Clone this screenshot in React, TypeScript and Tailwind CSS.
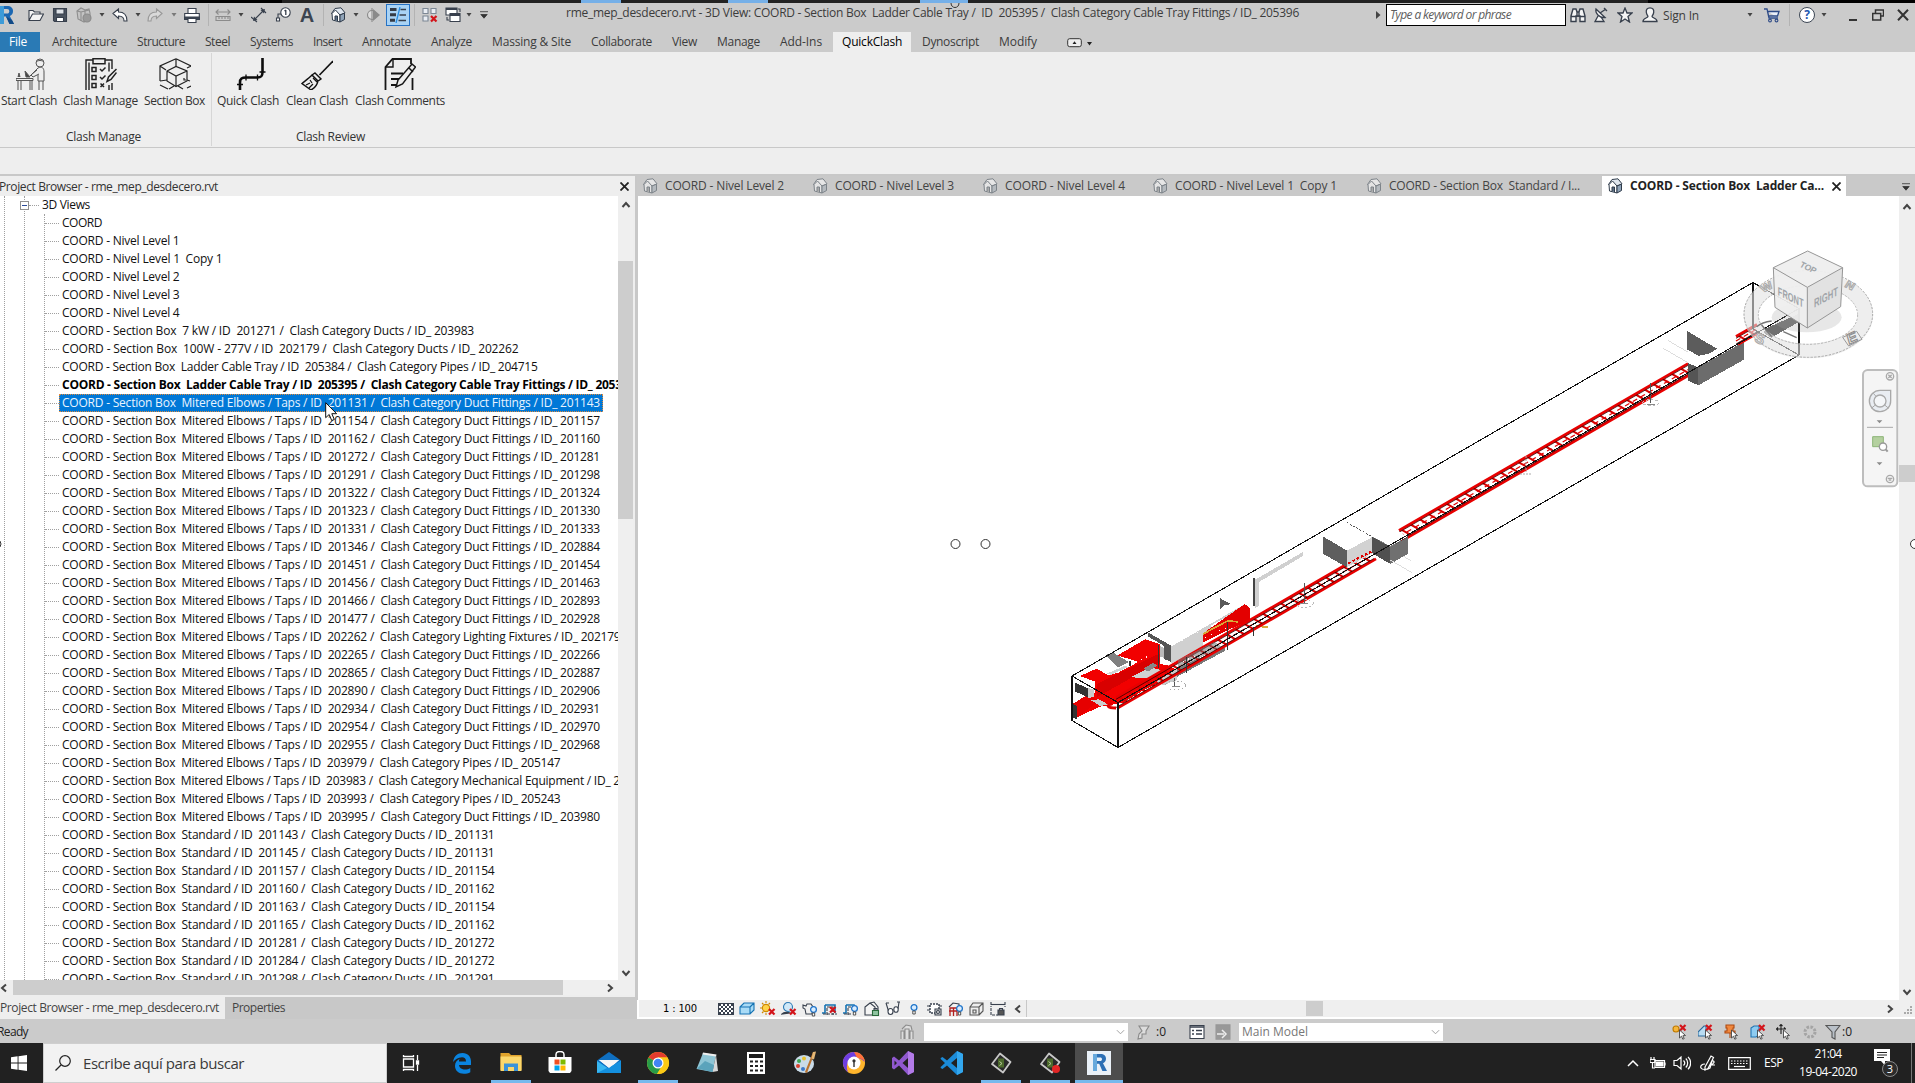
import React, { useLayoutEffect, useRef, useState } from "react";

/** Single-line label whose tracking is tuned so that it fills exactly `w` pixels. */
function T({ w, children, className = "" }: { w: number; children: string; className?: string }) {
  const ref = useRef<HTMLSpanElement>(null);
  const [ls, setLs] = useState(0);
  useLayoutEffect(() => {
    const el = ref.current;
    if (el) setLs((w - el.getBoundingClientRect().width) / children.length);
  }, [w, children]);
  return (
    <span ref={ref} className={"inline-block shrink-0 whitespace-pre " + className} style={{ letterSpacing: ls + "px" }}>
      {children}
    </span>
  );
}

type IP = { className?: string; children?: React.ReactNode; vb?: string };
const I = ({ className = "", children, vb = "0 0 16 16" }: IP) => (
  <svg viewBox={vb} className={"block h-4 w-4 shrink-0 " + className} fill="none" stroke="#38404d" strokeWidth="1.1">
    {children}
  </svg>
);
const Caret = ({ className = "" }: { className?: string }) => (
  <svg viewBox="0 0 6 4" className={"block h-1 w-1.5 shrink-0 " + className}>
    <path d="M.5 0h5L3 3.6z" fill="#444" />
  </svg>
);
const Sep = ({ className = "" }: { className?: string }) => <div className={"h-[22px] w-px shrink-0 bg-[#b3b3b3] " + className} />;

const House = ({ dim = false }: { dim?: boolean }) => (
  <g stroke={dim ? "#7d8389" : "#2f3b4a"} strokeWidth="1">
    <path d="M1.500 6.500 5 1.500l6-.7 4 5-5 2.200z" fill={dim ? "#e6e6e6" : "#dfe6ee"} />
    <path d="M2 6.500 5.500 3l4.500 5v7l-7.500-2z" fill={dim ? "#e4e4e4" : "#fff"} />
    <path d="M10 8l4.500-1.800v6.300L10 15z" fill={dim ? "#b5babf" : "#8fa3b8"} />
    <path d="M5 13.500V9h2.500v5" fill={dim ? "#aaa" : "#5c6f84"} />
  </g>
);
const RedX = ({ x = 9, y = 9 }: { x?: number; y?: number }) => (
  <path d={`M${x} ${y}l5.5 5.5m0-5.5l-5.5 5.5`} stroke="#d3141a" strokeWidth="2.2" />
);
const Bulb = ({ x = 8, y = 5 }: { x?: number; y?: number }) => (
  <g transform={`translate(${x} ${y})`}>
    <circle cx="3.5" cy="3.5" r="2.9" fill="#d9edff" stroke="#1f74c9" strokeWidth="1.3" />
    <path d="M2.3 7h2.4v3H2.3z" fill="#fff" stroke="#444" strokeWidth=".9" />
  </g>
);
const Cur = () => <path d="M7.5 6v8l2-1.8 1.3 3 1.4-.6-1.3-2.9 2.6-.2z" fill="#fff" stroke="#444" strokeWidth=".9" />;

function TitleBar() {
  return (
    <div className="flex h-[29px] items-center bg-[#cbcbcb] pb-[5px] text-[12px] text-[#3c3c3c]">
      <svg viewBox="0 0 14 18" className="h-[18px] w-[14px] shrink-0">
        <path d="M0 0h7c4 0 6 2 6 5.300 0 2.500-1.300 4-3.200 4.700L14 18h-4.500L6 10.500H4V18H0z" fill="#1b67b2" />
        <path d="M0 0h4v18H0z" fill="#3d9bd8" />
        <path d="M4 3h3c1.500 0 2.200.8 2.200 2.200S8.500 7.500 7 7.500H4z" fill="#cbcbcb" />
        <path d="M6 10.500 9.500 18H14l-2-4z" fill="#124a86" />
      </svg>
      <I className="ml-[14px]"><path d="M1 13.500V3.500h4l1.500 1.500H12v2M1 13.500l3.500-6.500h11L12 13.500z" fill="#f4f4f4" /></I>
      <I className="ml-2"><path d="M1.500 1.500h13v13h-12l-1-1z" fill="#4b535f" /><path d="M4 2h8v5H4z" fill="#dfe3e8" /><path d="M4.500 10.500h7v4h-7z" fill="#fff" /></I>
      <I className="ml-2"><path d="M1 4l4-3 4 2 4-1 1 4v5l-6 4-6-3z" fill="#c4c4c4" stroke="#8e8e8e" /><path d="M5 5v9M9 3v4M1 4l4 1 8-2" stroke="#8e8e8e" /><circle cx="11" cy="11" r="4" fill="#9a9a9a" stroke="#8a8a8a" /></I>
      <Caret className="ml-[7px]" />
      <I className="ml-[7px]"><path d="M1 6.500 6.500 2v3C12 5 15 8 15 14h-3c0-3-1.500-5-5.500-5v2.500z" fill="#fff" /></I>
      <Caret className="ml-[7px]" />
      <I className="ml-[6px]"><path d="M15 6.500 9.500 2v3C4 5 1 8 1 14h3c0-3 1.500-5 5.500-5v2.500z" fill="#d9d9d9" stroke="#999" /></I>
      <Caret className="ml-2 opacity-60" />
      <I className="ml-[7px]"><path d="M4 1.500h8v5H4z" fill="#fff" /><path d="M.7 6.500h14.600v6H.7z" fill="#fff" /><path d="M.7 10h14.600v2.500H.7z" fill="#3c4654" /><path d="M4 11.500h8v4H4z" fill="#fff" /></I>
      <Sep className="ml-2" />
      <I className="ml-[6px]"><path d="M1 5h14M3.500 2.500 1 5l2.500 2.500M12.500 2.500 15 5l-2.500 2.500M1 9.500h14v4H1zM4 10v2m3-2v2m3-2v2m3-2v2" stroke="#8b8b8b" /></I>
      <Caret className="ml-[7px]" />
      <I className="ml-[7px]"><path d="M3 13 13 3M0 10l6 5M10 1l5 5" /><path d="M2 14l1-4.500L6.500 13zM14 2l-1 4.500L9.500 3z" fill="#38404d" stroke="none" /></I>
      <I className="ml-2"><circle cx="10.500" cy="5.500" r="4.700" fill="#fff" /><path d="M10.800 3v5M9.500 4l1.300-1" strokeWidth="1.300" /><path d="M6 7H3v5" /><path d="M1.500 11h3v3h-3z" fill="#fff" /></I>
      <span className="ml-2 w-4 shrink-0 text-center font-['Liberation_Sans'] text-[20px] leading-4 font-bold text-[#3c4450]">A</span>
      <Sep className="ml-2" />
      <I className="ml-[6px]"><House /></I>
      <Caret className="ml-[7px]" />
      <I className="ml-[6px]"><circle cx="7" cy="8" r="4.500" fill="#ddd" stroke="#8a8a8a" /><path d="M8 2l7 6-7 6z" fill="#8a8a8a" stroke="none" /><path d="M7 1v14" stroke="#8a8a8a" /></I>
      <div className="ml-[5px] flex h-[22px] w-6 shrink-0 items-center justify-center border border-[#2672c4] bg-[#a9d3f5]">
        <I><path d="M0 2.500h6.500M0 7.800h6M0 13.200h5" strokeWidth="3" stroke="#343b46" /><path d="M10.500 2.500H16M9.500 8H16M8.500 13.500H16" strokeWidth="1.300" /><path d="M10 0 6 16" stroke="#2b8de0" strokeWidth="1.300" /></I>
      </div>
      <Sep className="ml-1" />
      <I className="ml-[7px]"><path d="M1 1.500h5v5H1zM9 1.500h5v5H9zM1 9h5v5H1z" fill="#e9edf3" stroke="#7c8794" /><RedX x={9} y={9} /></I>
      <I className="ml-[7px]"><path d="M1 1h11v7H1z" fill="#fff" /><path d="M5 6.500h10v8H5z" fill="#fff" /><path d="M5 8h10M1 2h11" strokeWidth="1.800" /><path d="M13 2h2v3M2 10v3h2" /></I>
      <Caret className="ml-[5px]" />
      <svg viewBox="0 0 8 8" className="ml-2 h-2 w-2 shrink-0"><path d="M0 .7h8M.8 3.500h6.400L4 7.200z" fill="#333" stroke="#333" strokeWidth=".8" /></svg>
      <T w={733} className="ml-[78px] pb-[5px]">{"rme_mep_desdecero.rvt - 3D View: COORD - Section Box  Ladder Cable Tray /  ID  205395 /  Clash Category Cable Tray Fittings / ID_ 205396"}</T>
      <svg viewBox="0 0 5 8" className="ml-[77px] h-2 w-[5px] shrink-0"><path d="M0 0l4.500 4L0 8z" fill="#444" /></svg>
      <div className="ml-[5px] flex h-[22px] w-[180px] shrink-0 items-center border border-black bg-white pl-[3px] text-[#5d5d5d] italic"><T w={121}>Type a keyword or phrase</T></div>
      <I className="ml-1"><path d="M1 9 3 2h3l1 3h2l1-3h3l2 7v5.500h-5V9H6v5.500H1zM1 9.500h5M10 9.500h5M7 5v5m2-5v5" fill="#f5f5f5" strokeWidth="1.400" /></I>
      <I className="ml-[7px]"><path d="M3 2c-1 4 3 9 9 8.500zM5 9l-3 5.500h9L8 10M7 6l6-4M11 1l3 3" fill="#f5f5f5" strokeWidth="1.300" /></I>
      <I className="ml-2"><path d="M8 1l2 5h5l-4 3.500 1.500 5.500L8 12l-4.500 3L5 9.500 1 6h5z" fill="#f5f5f5" strokeWidth="1.300" /></I>
      <I className="ml-[9px]"><path d="M8 .8c3 0 4 2 3.700 4.500-.2 2-1.200 3.200-1.700 4 0 2 5 1.500 5 5.200H1C1 10.800 6 11.300 6 9.300c-.5-.8-1.500-2-1.700-4C4 2.800 5 .8 8 .8z" fill="#f5f5f5" strokeWidth="1.300" /></I>
      <T w={36} className="ml-[5px] pt-px">Sign In</T>
      <Caret className="ml-12" />
      <I className="ml-[11px]"><path d="M0 2h3l2 9h9M3.500 4.500H15L13.500 9H5" fill="#eaf0fa" stroke="#2d4a86" strokeWidth="1.300" /><circle cx="6" cy="13.500" r="1.400" stroke="#2d4a86" /><circle cx="12.500" cy="13.500" r="1.400" stroke="#2d4a86" /></I>
      <Sep className="ml-[9px]" />
      <div className="ml-[9px] flex h-4 w-4 shrink-0 items-center justify-center rounded-full border border-[#3c4654] bg-white text-[12px] font-bold text-[#2457b0]">?</div>
      <Caret className="ml-[6px]" />
      <div className="mt-[9px] ml-[22px] h-[2px] w-2 shrink-0 bg-[#333]" />
      <I vb="0 0 12 12" className="ml-[15px] !h-3 !w-3"><path d="M3.500 4V1h8v6H9M.7 4.500h8V11h-8z" strokeWidth="1.500" stroke="#333" /></I>
      <I vb="0 0 12 12" className="ml-[13px] !h-3 !w-3"><path d="M1 .8 11 11.200M11 .8 1 11.200" strokeWidth="2" stroke="#333" /></I>
    </div>
  );
}

const tabs: [string, number][] = [
  ["Architecture", 65], ["Structure", 48], ["Steel", 25], ["Systems", 43], ["Insert", 29], ["Annotate", 49], ["Analyze", 41],
  ["Massing & Site", 79], ["Collaborate", 61], ["View", 25], ["Manage", 43], ["Add-Ins", 42], ["QuickClash", 60], ["Dynoscript", 57], ["Modify", 38],
];

function TabStrip() {
  return (
    <div className="flex h-5 bg-[#cbcbcb] text-[12px] leading-5 text-[#3c3c3c]">
      <div className="flex w-10 shrink-0 bg-[#2a7ab5] pl-[9px] text-white"><T w={18}>File</T></div>
      <div className="flex pl-[3px]">
        {tabs.map(([t, w]) => (
          <div key={t} className={"mr-[2px] flex px-[9px] last:mr-0 " + (t === "QuickClash" ? "bg-[#eeeeee] text-black" : "")}><T w={w}>{t}</T></div>
        ))}
      </div>
      <svg viewBox="0 0 26 10" className="mt-[6px] ml-[21px] h-[10px] w-[26px]">
        <rect x=".7" y=".7" width="13.600" height="8" rx="2" fill="#eee" stroke="#333" />
        <path d="M5.500 6h4L7.500 3.300zM20 4h5l-2.500 3.500z" fill="#222" />
      </svg>
    </div>
  );
}

const ric = {
  start: (
    <g strokeWidth="1" stroke="#555">
      <circle cx="24" cy="5" r="4" /><path d="M20 4c2-2 6-2 8 0M22 10l-8 8M21 12l-6 5 2 2 6-3M22 10c4-2 6 0 6 4v9h-6v-6M23 23v9m4-9v9M0 20.500h17v2H0zM2 23v9m3-9v9m9-9v9m2-9v9" />
      <path d="M9 13l5 6h-4zM2 19l1-4 1 4" fill="#444" />
    </g>
  ),
  manage: (
    <g strokeWidth="2" stroke="#222">
      <path d="M1 32V2h26v9M27 25v7M4 32V4.500M24 4.500v9M24 27v5" strokeWidth="1.400" />
      <path d="M8 .8h12v5H8z" fill="#eee" strokeWidth="1.500" />
      <path d="M7 9.500h4v4H7zM7 17.500h4v4H7zM7 25.500h4v4H7z" strokeWidth="1.500" />
      <path d="M15 11l2 2 3.500-3.500M15 19l2 2 3.500-3.500M15.500 25.500l3.500 3.500m0-3.500L15.500 29" strokeWidth="1.500" />
      <path d="M31.500 11l-8 8-1.500 4.500 4-2 5.500-7" strokeWidth="1.500" fill="#eee" />
    </g>
  ),
  box: (
    <g strokeWidth="1.200" stroke="#222">
      <path d="M17 .7 32 8M17 .7 1 8v15M1 27l8 4M32 8l-4 2M17 9V1M1 8l6 4M31 23l-3-1" />
      <path d="M8 13l9-4.500L28 13v10L17 28.500 8 23zM8 13l9 5 11-5M17 18v10" />
      <path d="M25 20v2h2M1 23l7-1M10 31l5-3M24 31l-5-3M28 30l4-2" strokeWidth="1.200" />
    </g>
  ),
  pipe: (
    <g stroke="#0c0c0c">
      <path d="M26.500 0v14c0 4-1 5.500-5 5.500H10c-4 0-6 1-6 5V32" strokeWidth="2.600" />
      <path d="M23.500 14h6M21.500 16.500v6M10 16.500v6M1 26.500h6" strokeWidth="1.300" />
    </g>
  ),
  broom: (
    <g strokeWidth="1.600" stroke="#111">
      <path d="M32 3 18.500 17" /><path d="M14 15l6 6-3 2-6-6zM11 17C8 20 4 23 1 25.500L10 32c4-2 6-5 7-9z" strokeWidth="1.400" /><path d="M5 27l4-2M8 30l4-4M12 20l4 4M9 22l2 3" strokeWidth="1.200" />
    </g>
  ),
  note: (
    <g strokeWidth="1.800" stroke="#151515">
      <path d="M1.500 32V9l7-8H27v5M28.500 20v12" /><path d="M9 1v8H2" strokeWidth="1.400" /><path d="M7 15.500h12M7 21h9M7 27h5" strokeWidth="1.800" />
      <path d="M28 6l3.500 3-13 17-6.500 3 2-7zM25 10l4 4" strokeWidth="1.500" fill="#eee" />
    </g>
  ),
};
const RB = ({ icon, w, children, className, iconClass }: { icon: React.ReactNode; w: number; children: string; className: string; iconClass: string }) => (
  <div className={"shrink-0 " + className}>
    <svg viewBox="0 0 32 32" className={"block h-8 w-8 " + iconClass} fill="none">{icon}</svg>
    <div className="mt-[2px] h-[18px] leading-[18px]"><T w={w}>{children}</T></div>
  </div>
);

function Ribbon() {
  return (
    <div className="h-[96px] border-b border-[#c8c8c8] bg-[#eeeeee] pt-px text-[12px] text-[#333]">
      <div className="flex h-[93px]">
        <div className="flex w-[212px] shrink-0 flex-col border-r border-[#d6d6d6] pt-[5px]">
          <div className="flex pl-px">
            <RB icon={ric.start} w={56} className="w-[62px]" iconClass="ml-[15px]">Start Clash</RB>
            <RB icon={ric.manage} w={75} className="w-[81px]" iconClass="ml-[22px]">Clash Manage</RB>
            <RB icon={ric.box} w={61} className="w-[61px]" iconClass="ml-[15px]">Section Box</RB>
          </div>
          <div className="mt-[18px] h-[18px] pl-[66px] leading-[18px]"><T w={75}>Clash Manage</T></div>
        </div>
        <div className="flex flex-col pt-[5px] pl-[5px]">
          <div className="flex">
            <RB icon={ric.pipe} w={62} className="w-[69px]" iconClass="ml-[19px]">Quick Clash</RB>
            <RB icon={ric.broom} w={62} className="w-[69px]" iconClass="ml-[15px]">Clean Clash</RB>
            <RB icon={ric.note} w={90} className="w-[91px]" iconClass="ml-[29px]">Clash Comments</RB>
          </div>
          <div className="mt-[18px] h-[18px] pl-[79px] leading-[18px]"><T w={69}>Clash Review</T></div>
        </div>
      </div>
    </div>
  );
}

type Row = [string, number, string?];
const mit = (a: string, cat: string, b: string, w: number): Row => [`COORD - Section Box  Mitered Elbows / Taps / ID  ${a} /  Clash Category ${cat} / ID_ ${b}`, w];
const df = (a: string, b: string) => mit(a, "Duct Fittings", b, 538);
const std = (a: string, b: string): Row => [`COORD - Section Box  Standard / ID  ${a} /  Clash Category Ducts / ID_ ${b}`, 432.5];
const rows: Row[] = [
  ["COORD", 40], ["COORD - Nivel Level 1", 117.5], ["COORD - Nivel Level 1  Copy 1", 160.5], ["COORD - Nivel Level 2", 117.5], ["COORD - Nivel Level 3", 117.5], ["COORD - Nivel Level 4", 117.5],
  ["COORD - Section Box  7 kW / ID  201271 /  Clash Category Ducts / ID_ 203983", 412],
  ["COORD - Section Box  100W - 277V / ID  202179 /  Clash Category Ducts / ID_ 202262", 456.5],
  ["COORD - Section Box  Ladder Cable Tray / ID  205384 /  Clash Category Pipes / ID_ 204715", 475.5],
  ["COORD - Section Box  Ladder Cable Tray / ID  205395 /  Clash Category Cable Tray Fittings / ID_ 205396", 573, "bold"],
  [...(df("201131", "201143").slice(0, 2) as [string, number]), "sel"],
  df("201154", "201157"), df("201162", "201160"), df("201272", "201281"), df("201291", "201298"), df("201322", "201324"), df("201323", "201330"), df("201331", "201333"),
  df("201346", "202884"), df("201451", "201454"), df("201456", "201463"), df("201466", "202893"), df("201477", "202928"),
  mit("202262", "Lighting Fixtures", "202179", 558.5),
  df("202265", "202266"), df("202865", "202887"), df("202890", "202906"), df("202934", "202931"), df("202954", "202970"), df("202955", "202968"),
  mit("203979", "Pipes", "205147", 498.5), mit("203983", "Mechanical Equipment", "205148", 591), mit("203993", "Pipes", "205243", 498.5), df("203995", "203980"),
  std("201143", "201131"), std("201145", "201131"), std("201157", "201154"), std("201160", "201162"), std("201163", "201154"), std("201165", "201162"),
  std("201281", "201272"), std("201284", "201272"), std("201298", "201291"),
];

const Chev = ({ d, className = "" }: { d: string; className?: string }) => (
  <svg viewBox="0 0 10 10" className={"block h-[10px] w-[10px] shrink-0 " + className} fill="none" stroke="#444" strokeWidth="2"><path d={d} /></svg>
);
const UP = "M1.500 7 5 3l3.500 4", DN = "M1.500 3 5 7l3.500-4", LT = "M7 1.500 3 5l4 3.500", RT = "M3 1.500 7 5 3 8.500";

function Browser() {
  return (
    <div className="flex w-[637px] shrink-0 flex-col border-r-2 border-[#c8c8c8] bg-[#eeeeee] text-[12px]">
      <div className="flex h-5 items-center justify-between pr-[6px] text-[#333]">
        <T w={219} className="-ml-px pt-[2px]">Project Browser - rme_mep_desdecero.rvt</T>
        <svg viewBox="0 0 10 10" className="h-[9px] w-[9px]" stroke="#222" strokeWidth="2"><path d="M.5.5l9 9m0-9l-9 9" /></svg>
      </div>
      <div className="flex h-[784px]">
        <div className="relative w-[618px] overflow-hidden bg-white text-[#111]">
          <div className="pointer-events-none absolute inset-y-0 left-[4px] border-l border-dotted border-[#a0a0a0]" />
          <div className="pointer-events-none absolute inset-y-0 left-[24px] border-l border-dotted border-[#a0a0a0]" />
          <div className="pointer-events-none absolute top-[18px] bottom-0 left-[44px] border-l border-dotted border-[#a0a0a0]" />
          <div className="flex h-[18px] items-center pl-5">
            <div className="relative flex h-[9px] w-[9px] items-center justify-center border border-[#919191] bg-white"><div className="h-px w-[5px] bg-[#2b4b9b]" /></div>
            <div className="mr-[3px] w-[10px] border-t border-dotted border-[#a0a0a0]" />
            <T w={48}>3D Views</T>
          </div>
          {rows.map(([t, w, k]) => (
            <div key={t} className="flex h-[18px] items-center pl-[45px] leading-[18px]">
              <div className="w-[14px] shrink-0 border-t border-dotted border-[#a0a0a0]" />
              <div className={k === "sel" ? "h-[18px] shrink-0 border border-dotted border-[#e08a3c] bg-[#0078d7] px-[2px] leading-4 text-[#e9f4ff]" : k === "bold" ? "ml-[3px] font-bold text-black" : "ml-[3px]"}>
                <T w={w}>{t}</T>
              </div>
            </div>
          ))}
          <svg viewBox="0 0 13 20" className="absolute top-[206px] left-[325px] h-5 w-[13px]"><path d="M.7.7v15l3.500-3.200 2.500 6 2.600-1-2.500-5.800h4.800z" fill="#fff" stroke="#111" /></svg>
        </div>
        <div className="flex w-[15px] flex-col items-center justify-between bg-[#efefef] pt-1 pb-[2px]">
          <Chev d={UP} />
          <div className="mt-[51px] mb-auto h-[258px] w-[15px] bg-[#cdcdcd]" />
          <Chev d={DN} />
        </div>
      </div>
      <div className="flex h-[15px] items-center bg-[#efefef]">
        <Chev d={LT} className="-ml-px" />
        <div className="ml-1 h-[15px] w-[550px] bg-[#cdcdcd]" />
        <Chev d={RT} className="ml-[42px]" />
      </div>
      <div className="mt-[2px] flex h-[22px] bg-[#c8c8c8] leading-[22px] text-[#444]">
        <div className="w-[225px] bg-[#eeeeee]"><T w={219}>Project Browser - rme_mep_desdecero.rvt</T></div>
        <T w={53} className="ml-[7px]">Properties</T>
      </div>
    </div>
  );
}

const docTabs: [string, number, string][] = [
  ["COORD - Nivel Level 2", 119, "w-[170px]"], ["COORD - Nivel Level 3", 119, "w-[170px]"], ["COORD - Nivel Level 4", 120, "w-[170px]"],
  ["COORD - Nivel Level 1  Copy 1", 162, "w-[214px]"], ["COORD - Section Box  Standard / I...", 191, "w-[236px]"],
];

/** Ladder-style cable tray between two x positions; `u` is the upper rail height at x0. */
function Tray({ x0, x1, u, h }: { x0: number; x1: number; u: number; h: number }) {
  const k = 0.5775;
  const dx = h / (2 * k);
  const n = Math.floor((x1 - x0) / 9);
  return (
    <g>
      {Array.from({ length: n }, (_, i) => {
        const x = x0 + 2 + i * 9;
        const y = u - k * (x - x0);
        return <path key={i} d={`M${x} ${y}l${dx} ${dx * k}`} stroke="#d80000" strokeWidth="2" />;
      })}
      <path d={`M${x0} ${u + h / 2}L${x1} ${u + h / 2 - k * (x1 - x0)}`} stroke="#e00000" strokeWidth="1.300" strokeDasharray="5 4" />
      <path d={`M${x0} ${u}L${x1} ${u - k * (x1 - x0)}M${x0 + 2} ${u + h - 2 * k}L${x1 + 2} ${u + h - k * (x1 + 2 - x0)}`} stroke="#e80000" strokeWidth="2.800" />
      <path d={`M${x0} ${u + 1.800}L${x1} ${u + 1.800 - k * (x1 - x0)}M${x0} ${u + h - 1.500}L${x1} ${u + h - 1.500 - k * (x1 - x0)}`} stroke="#300" strokeWidth=".8" />
    </g>
  );
}

function Scene() {
  return (
    <svg viewBox="638 196 1261 804" className="block h-[804px] w-[1261px]" fill="none">
      <g>
        <g transform="translate(1050 540) scale(.33333)" shapeRendering="crispEdges">
          <path d="M90 408l50-22 35 20 30-8 60-32-62-20 82-48 45 14v60l25 5 35 18-110 56-60 37-70 12-70 32v-40l55-35v-32z" fill="#f20000" />
          <path d="M140 432l190-92v25L215 430l-75 42z" fill="#d80000" />
          <path d="M68 492l40-25 40 15-68 52-12-8z" fill="#e60000" />
          <path d="M68 492l12 5v40l-12-4z" fill="#333" />
          <path d="M75 428l38 16v28l-38-18z" fill="#333" />
          <path d="M113 444l20 5v22l-20 3z" fill="#ccc" />
          <path d="M140 386l28 16 35-2 30-22-65-32z" fill="#fff" />
          <path d="M168 402l60-26 6 6-50 22z" fill="#cfd4d4" />
          <path d="M165 345l27-6 45 27-33 16z" fill="#808080" />
          <path d="M240 412l60-30 40 10-40 22z" fill="#cfd4d4" />
          <path d="M280 385l30-16 12 8-28 18z" fill="#888" />
          <path d="M122 480l25-2 28 16-25 4z" fill="#ccc" />
          <path d="M382 385l140-65 4 12-144 78z" fill="#7a7a7a" />
          <path d="M320 425l60-38v34l-40 14z" fill="#c9cccc" />
          <path d="M295 278l70 40v48l-22-8v-40l-48-28z" fill="#555" />
          <path d="M330 318l12 6v30l-12-5z" fill="#bbb" />
          <path d="M363 320l222-128v10L400 300z" fill="#cfcfcf" />
          <path d="M363 320l97-46v54l-97 42z" fill="#d4d4d4" />
          <path d="M363 320l120-64v17l-24 12v40l-96 45z" fill="#d0d0d0" />
          <path d="M459 280l125-88 16 12v34l-141 70z" fill="#e30000" />
          <path d="M459 282l75-40 30 4M618 258l35 4" stroke="#d8a838" strokeWidth="5" />
          <path d="M609 113h7v85h-7z" fill="#444" />
          <path d="M614 120l145-84v12L627 126v72l-12 6z" fill="#d0d0d0" />
          <path d="M511 175l32 18-20 2-12 14z" fill="#5a5a5a" />
        </g>
        <Tray x0={1116} x1={1374} u={697.500} h={11.500} />
        <Tray x0={1399} x1={1688} u={530.500} h={12} />
        <path d="M1112 704c-6 1-5 4 4 4" stroke="#e00000" strokeWidth="3" />
        <g transform="translate(1050 540) scale(.33333)" shapeRendering="crispEdges">
          <path d="M383 360l110-54 22 14-132 66z" fill="#777" fillOpacity=".55" />
          <path d="M325 315v70M410 350v50M533 245v85M610 260v28M240 363v15" stroke="#333" strokeWidth="3.500" />
          <path d="M763 130v58M375 415v25" stroke="#555" strokeWidth="3" />
          <ellipse cx="763" cy="190" rx="27" ry="12" stroke="#bbb" strokeWidth="3" strokeDasharray="5 7" />
          <ellipse cx="377" cy="436" rx="30" ry="13" stroke="#aaa" strokeWidth="3" strokeDasharray="5 7" />
          <path d="M750 190h24M365 441h24" stroke="#888" strokeWidth="3" />
          <path d="M465 293h3m15-10h3m20-11h3m15-6h3M255 365h3m14-7h3m14-7h3M400 365h3m12-8h3m14-8h3" stroke="#fff" strokeWidth="4" />
        </g>
        <g transform="translate(1280 480) scale(.33333)" shapeRendering="crispEdges">
          <path d="M200 127l-70 42 71 42 75-40z" fill="#fff" />
          <path d="M200 127l76 43" stroke="#555" strokeWidth="3" strokeDasharray="6 5" />
          <path d="M130 170l71 42v50l-71-40z" fill="#5e5e5e" />
          <path d="M201 212l76-41v49l-76 42z" fill="#d2d2d2" />
          <path d="M277 171l54 30v51l-54-32z" fill="#505050" />
          <path d="M331 201l53-30v50l-53 31z" fill="#707070" />
          <path d="M331 240l65 38M370 228l22 14" stroke="#ddd" strokeWidth="3" />
          <path d="M277 171l55 28 50-29-28-15z" fill="#fff" />
          <path d="M277 171l54 29 53-30" stroke="#444" strokeWidth="2" />
          <path d="M205 250l70-36" stroke="#e00000" strokeWidth="6" strokeDasharray="8 6" />
        </g>
        <g transform="translate(1640 230) scale(.33333)" shapeRendering="crispEdges">
          <path d="M70 355l72 42M85 332l60 35" stroke="#ddd" strokeWidth="3" />
          <path d="M141 303l105 62-70 12-35-18z" fill="#5c5c5c" />
          <path d="M146 402L370 285l108-48v24L312 337l-137 75z" fill="#fff" />
          <path d="M145 400l30 12v54l-30-14z" fill="#555" />
          <path d="M175 412l137-77v54l-137 77z" fill="#6c6c6c" />
          <path d="M375 296l103-45v24l-84 48-22-14z" fill="#707070" />
          <path d="M32 460v60" stroke="#555" strokeWidth="3" />
          <path d="M20 523h24" stroke="#888" strokeWidth="3" />
          <ellipse cx="32" cy="518" rx="25" ry="9" stroke="#bbb" strokeWidth="3" strokeDasharray="8 6" />
        </g>
        <Tray x0={1736} x1={1757} u={336.500} h={9} />
        <path d="M1526 456v16M1520 474h12" stroke="#aaa" strokeDasharray="2 1" />
      </g>
      <g stroke="#111" strokeWidth="1.100" shapeRendering="crispEdges">
        <path d="M1072 676 1753 282.500 1799 308.500V355L1118 747.500 1072 720.500zM1118 747.500V702.500L1799 308.500M1072 676 1118 702.500M1753 282.500V329L1799 355" />
      </g>
      <g stroke="#333"><circle cx="955.500" cy="544" r="4.500" fill="#fff" /><circle cx="985.500" cy="544" r="4.500" fill="#fff" /></g>
      <g transform="translate(1640 230) scale(.33333)">
        <ellipse cx="505" cy="255" rx="172" ry="108" stroke="#e3e3e3" strokeOpacity=".6" strokeWidth="44" />
        <ellipse cx="505" cy="252" rx="193" ry="130" stroke="#a8a8a8" strokeWidth="3" strokeDasharray="7 4" />
        <ellipse cx="504" cy="255" rx="149" ry="88" stroke="#b4b4b4" strokeWidth="3" strokeDasharray="7 4" />
        <ellipse cx="500" cy="262" rx="105" ry="45" fill="#a0a0a0" fillOpacity=".25" />
        <path d="M400 113L503 63l105 50-6 117-100 64-97-62z" fill="#eeeeee" fillOpacity=".95" />
        <path d="M502 172l106-58-6 116-100 64z" fill="#e2e2e2" />
        <path d="M400 113l102 59 106-59M502 172v122M400 113L503 63l105 50-6 117-100 64-97-62z" stroke="#969696" strokeWidth="3" />
        <g fontFamily="Liberation Sans" fontWeight="bold" fill="#a0a4a8" textAnchor="middle">
          <text transform="matrix(.85 .42 -.5 .8 500 120)" fontSize="27">TOP</text>
          <text transform="matrix(.72 .36 0 1.150 452 214)" fontSize="31">FRONT</text>
          <text transform="matrix(.72 -.38 0 1.150 558 214)" fontSize="32">RIGHT</text>
          <text transform="matrix(1 -.45 .3 1 640 338)" fontSize="42" fill="#eee" stroke="#8d8d8d" strokeWidth="3">E</text>
          <text transform="matrix(1 .4 -.3 1 355 340)" fontSize="40" fill="#eee" stroke="#aaa" strokeWidth="3">S</text>
          <text transform="matrix(1 .5 -.5 .8 624 176)" fontSize="34" fill="#eee" stroke="#aaa" strokeWidth="3">N</text>
          <text transform="matrix(1 -.5 .5 .8 385 180)" fontSize="34" fill="#eee" stroke="#aaa" strokeWidth="3">W</text>
        </g>
        <path d="M608 322l42-18 16 24-40 20z" stroke="#999" strokeWidth="3" />
        <path d="M365 285l30 35M350 290c15-12 30-15 45-17M430 305l40 18" stroke="#777" strokeWidth="4" />
      </g>
      <g transform="translate(1640 230) scale(.33333)">
        <rect x="669" y="420" width="103" height="349" rx="14" fill="#f5f5f5" stroke="#bdbdbd" strokeWidth="6" />
        <g stroke="#a9a9a9" strokeWidth="4">
          <circle cx="750" cy="439" r="11" /><path d="M745 434l10 10m0-10l-10 10" />
          <circle cx="750" cy="747" r="11" /><path d="M743 745h14M746 750h8" />
          <path d="M720 481h32v31a32 32 0 1 1-32-31z" fill="#e9edf2" /><circle cx="720" cy="513" r="18" fill="#f4f6f8" />
          <path d="M694 535l12-10M746 535l-12-10M700 490l8 9" strokeWidth="3" />
          <path d="M681 592h78" strokeWidth="3" />
        </g>
        <path d="M710 571h17l-8.500 9zM710 697h17l-8.500 9z" fill="#8c8c8c" />
        <path d="M698 620h32v30h-32z" fill="#b4d09f" stroke="#8eb577" strokeWidth="3" />
        <circle cx="729" cy="650" r="11" fill="#fff" stroke="#999" strokeWidth="4" /><path d="M737 658l6 7" stroke="#999" strokeWidth="6" />
      </g>
    </svg>
  );
}

const House2 = () => <path d="M1 6l5-4 5 4v8H1zM6 2l4-1 4 5v7l-3 1" fill="#f4f4f4" />;
const viewIcons: React.ReactNode[] = [
  <><path d="M.5 2.500h15v11H.5z" fill="#fff" /><path d="M1 4h14M1 8h14M1 12h14" strokeDasharray="2 2" strokeWidth="2" /><path d="M3 6h12M3 10h12" strokeDasharray="2 2" strokeWidth="2" /></>,
  <><path d="M1 6l4-4h10v7l-4 4H1zM1 6h10v7M11 6l4-4" fill="#a9dbf6" stroke="#1673b3" /></>,
  <><circle cx="6" cy="7" r="3.600" fill="#ffd34a" stroke="#d08a00" /><path d="M6 0v2M0 7h2M2 2l1.500 1.500M10 2 8.500 3.500M2 12l1.500-1.500M6 14v-2" stroke="#d08a00" /><RedX x={9} y={8} /></>,
  <><circle cx="7" cy="6" r="4.500" fill="#cfe8f8" stroke="#2c7ab5" /><path d="M1 13c2-2 6-2 8-1z" fill="#666" /><RedX x={9} y={8} /></>,
  <><path d="M1 4l3 1 1-2h4l2 3-1 7H4L3 8 1 7z" fill="#f1f1f1" /><Bulb x={8} y={5} /></>,
  <><path d="M3 4h10v8M3 4v8H0" strokeWidth="1.600" stroke="#1673b3" /><path d="M1 13h14M5 14V6h6v8" strokeDasharray="3 1" /><RedX x={8} y={6} /></>,
  <><path d="M3 4h8v8M3 4v8H0" strokeWidth="1.600" stroke="#1673b3" /><path d="M1 13h8M5 14V6h4" strokeDasharray="3 1" /><Bulb x={8} y={4} /></>,
  <><House2 /><path d="M8.500 9.500h6v5h-6z" fill="#8fc4a0" stroke="#2a6a3c" /><path d="M10 9V7.500h3V9" /></>,
  <><path d="M1 2l2.500 8M14 1l-1 7" /><ellipse cx="5.500" cy="10.500" rx="2.500" ry="3" fill="#fff" /><ellipse cx="11" cy="8.500" rx="2.200" ry="2.800" fill="#fff" /><path d="M1 2h3M12 1h3" /></>,
  <Bulb x={4.500} y={3} />,
  <><path d="M3 3h9v9H3z" fill="#fff" strokeWidth="1.500" strokeDasharray="2 1" /><path d="M0 5h3M0 9h3M12 5h3M8 8h6v6H8z" fill="#ddd" /><circle cx="11" cy="11" r="1.500" /></>,
  <><path d="M1 6l4-4 6 1v4" fill="#f4f4f4" /><path d="M2 15V7h7v8M5.500 7v8M1 10h8" stroke="#b32020" strokeWidth="1.300" /><Bulb x={8} y={4} /></>,
  <><path d="M1 6h9v8H1zM1 6l3-4h10v8l-4 4M10 6l4-4M4 9h3v3H4z" fill="#eee" stroke="#555" /></>,
  <><path d="M1 1v5M15 1v5M1 3.500h14M1 7v7h7" strokeDasharray="3 1" /><path d="M1 3.500h14" /><path d="M8 9h6v5H8z" fill="#555" /><path d="M9.500 9V7.500h3V9" /></>,
];

function Canvas() {
  return (
    <div className="flex min-w-0 flex-1 flex-col bg-white">
      <div className="flex h-5 bg-[#c9c9c9] text-[12px] leading-[22px] text-[#444]">
        <div className="flex pl-[5px]">
          {docTabs.map(([t, w, c]) => (
            <div key={t} className={"flex shrink-0 items-center " + c}><I className="mr-[7px]"><House dim /></I><T w={w}>{t}</T></div>
          ))}
        </div>
        <div className="flex w-[244px] items-center bg-white pl-[5px] font-bold text-[#222]">
          <I className="mr-[7px]"><House /></I><T w={194}>COORD - Section Box  Ladder Ca...</T>
          <svg viewBox="0 0 10 10" className="ml-2 h-[9px] w-[9px]" stroke="#222" strokeWidth="2"><path d="M.5.5l9 9m0-9l-9 9" /></svg>
        </div>
        <svg viewBox="0 0 8 8" className="mt-[7px] ml-[56px] h-2 w-2 shrink-0"><path d="M0 .7h8M.8 3.500h6.400L4 7.200z" fill="#333" stroke="#333" strokeWidth=".8" /></svg>
      </div>
      <div className="flex h-[804px] border-l border-[#c8c8c8]">
        <Scene />
        <div className="flex w-4 flex-col items-center justify-between bg-[#efefef] pt-[6px] pb-[3px]">
          <Chev d={UP} />
          <div className="mt-[253px] mb-auto h-[17px] w-4 bg-[#cdcdcd]" />
          <Chev d={DN} />
        </div>
      </div>
      <div className="ml-[2px] flex h-[17px] items-center bg-[#efefef] text-[12px]">
        <T w={34} className="mr-[21px] ml-[24px] font-['DejaVu_Sans'] text-[10px] text-black">1 : 100</T>
        <div className="flex">{viewIcons.map((n, i) => <I key={i} className="mr-[4.900px]">{n}</I>)}</div>
        <Chev d={LT} className="ml-[3px]" />
        <div className="ml-[3px] h-[17px] w-px bg-[#c8c8c8]" />
        <div className="ml-[279px] h-[15px] w-[17px] bg-[#cdcdcd]" />
        <Chev d={RT} className="ml-[562px]" />
        <svg viewBox="0 0 9 9" className="mt-1 mr-[2px] ml-auto h-[9px] w-[9px]" fill="#aaa"><path d="M6 0h2v2H6zM3 3h2v2H3zM6 3h2v2H6zM0 6h2v2H0zM3 6h2v2H3zM6 6h2v2H6z" /></svg>
      </div>
    </div>
  );
}

function StatusBar() {
  const combo = "flex h-[18px] w-[204px] shrink-0 items-center justify-between bg-white pr-[3px] pl-[3px]";
  return (
    <div className="flex h-6 items-center bg-[#cbcbcb] pt-[2px] text-[12px] text-[#222]">
      <T w={31} className="-ml-[3px] pb-[1px]">Ready</T>
      <I className="ml-[871px]"><path d="M2 15V7h3v8M6 15V5h4v10M11 15V7h3v8M3 5l4-4 5 1 1 4" stroke="#8c8c8c" fill="#ddd" /></I>
      <div className={"ml-[9px] " + combo}><span /><svg viewBox="0 0 10 6" className="h-[6px] w-[9px]" fill="none" stroke="#999"><path d="M1 1l4 4 4-4" /></svg></div>
      <I className="ml-2"><path d="M3 2h10l-3 5v3H6v4l-4 1 1-5 3-3z" fill="#ddd" stroke="#8a8a8a" /></I>
      <T w={10} className="ml-1">:0</T>
      <I className="ml-[23px]"><path d="M1 1.500h14v13H1z" fill="#fff" /><path d="M1 3h14M3 6.500h2M3 10h2M7 6.500h6M7 10h6" strokeWidth="1.700" /></I>
      <I className="ml-[10px]"><path d="M1 .8h14v14.400H1z" fill="#999" stroke="#999" /><path d="M2 10h7M7 6l4 4-4 4" stroke="#eee" strokeWidth="1.500" /></I>
      <div className={"ml-2 text-[#777] " + combo}><T w={66}>Main Model</T><svg viewBox="0 0 10 6" className="h-[6px] w-[9px]" fill="none" stroke="#999"><path d="M1 1l4 4 4-4" /></svg></div>
      <I className="ml-[229px]"><circle cx="4" cy="5" r="3" fill="#f6b73c" stroke="#c07a00" /><RedX x={8} y={1} /><Cur /></I>
      <I className="ml-[10px]"><path d="M0 8l6-6h2v10H0z" fill="#b9dcf2" stroke="#2a6a9c" /><RedX x={8} y={1} /><Cur /></I>
      <I className="ml-[10px]"><path d="M2 1h8v3H9v3h2v2H1V7h2V4H2zM6 9v5" fill="#f0883e" stroke="#b04a10" /><Cur /></I>
      <I className="ml-[10px]"><path d="M1 4l3-2h5v9l-3 2H1z" fill="#8ecbf0" stroke="#2176b4" /><RedX x={9} y={1} /><Cur /></I>
      <I className="ml-[10px]"><path d="M5 0v10M0 5h10M3.500 2 5 .5 6.500 2M2 3.500.5 5 2 6.500M8 3.500 9.500 5" stroke="#222" /><Cur /></I>
      <I className="ml-[10px]"><circle cx="8" cy="8" r="5" stroke="#a4a4a4" strokeWidth="3" strokeDasharray="2.500 1.400" /></I>
      <I className="ml-[7px]"><path d="M1 1.500h14L10 8v7l-3-1.500V8z" fill="#b9c0c8" stroke="#555" /></I>
      <T w={10} className="ml-px">:0</T>
    </div>
  );
}

const Slot = ({ children, on, active, className = "w-[49px]" }: { children: React.ReactNode; on?: boolean; active?: boolean; className?: string }) => (
  <div className={"flex h-10 shrink-0 flex-col items-center " + className + (active ? " bg-[#4d4d4d]" : "")}>
    <svg viewBox="0 0 24 24" className="mt-2 block h-6 w-6" fill="none">{children}</svg>
    <div className={"mt-[5px] h-[3px] " + (active ? "w-full bg-[#76b9ed]" : on ? "w-10 bg-[#76b9ed]" : "")} />
  </div>
);
const Clip = () => (
  <>
    <path d="M11 2.500 21.500 11 14 21.500 3 13z" fill="#2a2a2a" stroke="#c9c9c9" strokeWidth="1.800" strokeLinejoin="round" />
    <path d="M9 7.500h6v9H9z" fill="#4c6a2c" /><path d="M10.500 10.500l2.500 2-2.500 2" stroke="#b9cc9c" />
  </>
);

function Taskbar() {
  return (
    <div className="flex h-10 bg-[#212121] text-white">
      <div className="flex w-[43px] shrink-0 items-center justify-center">
        <svg viewBox="0 0 16 16" className="mr-[5px] h-4 w-4" fill="#fff"><path d="M0 2.200 6.600 1.300v6.300H0zM7.500 1.200 16 0v7.600H7.500zM0 8.500h6.600v6.300L0 13.800zM7.500 8.500H16V16l-8.500-1.200z" /></svg>
      </div>
      <div className="flex w-[344px] shrink-0 items-center border border-[#cfcfcf] bg-[#f2f2f2] text-[15px] text-[#3a3a3a]">
        <svg viewBox="0 0 16 16" className="ml-[11px] h-4 w-4" fill="none" stroke="#222" strokeWidth="1.200"><circle cx="10" cy="6" r="5.300" /><path d="M6 10 .5 15.500" /></svg>
        <T w={161} className="ml-3">Escribe aquí para buscar</T>
      </div>
      <Slot className="w-[50px]"><g stroke="#fff" strokeWidth="1.300"><path d="M3.500 8h10v8h-10zM3.500 4v1.500h10V4M3.500 20v-1.500h10V20M17.500 4v5M17.500 14v6" /><path d="M16.500 10h2v3h-2z" fill="#fff" /></g></Slot>
      <Slot><path d="M3 11C4 5 7.500 2 12.500 2c5.500 0 8.500 4 8.500 8.500V14H9c.3 3 3 4.500 6 4.500 2 0 3.800-.5 5.300-1.500v4.200c-1.800 1-4 1.500-6.500 1.500C8.500 22.700 5 19.500 5 15c0-3.500 2-6 4.800-7.300C9 8.700 9 10 9 10.500h7c0-3-1.500-4.300-4-4.300-4 0-7 2.200-9 4.800z" fill="#0a84e0" /></Slot>
      <Slot on><path d="M1.500 2H10l2 2h10.500v15h-21z" fill="#e0a32c" /><path d="M1.500 5.500h21V20h-21z" fill="#fbd76c" /><path d="M5 20v-7.500h14V20h-4v-4H9v4z" fill="#3a93d8" /></Slot>
      <Slot><path d="M8 7V3.500c0-4 8-4 8 0V7" stroke="#fff" strokeWidth="1.500" /><path d="M.5 6h23v14l-1.500 2H2L.5 20z" fill="#fff" /><path d="M6.500 8.500h5v5h-5z" fill="#f25022" /><path d="M12.500 8.500h5v5h-5z" fill="#7fba00" /><path d="M6.500 14.500h5v5h-5z" fill="#00a4ef" /><path d="M12.500 14.500h5v5h-5z" fill="#ffb900" /></Slot>
      <Slot><path d="M0 9.500 12 1l12 8.500V22H0z" fill="#0f6fc0" /><path d="M2 9h20l-9 8.500z" fill="#f6f6f6" /><path d="M0 10l12 8 12-8v12H0z" fill="#38b6f0" /><path d="M0 22 24 10v12z" fill="#1490df" /><path d="M2 9h20l-10 8z" fill="#f6f6f6" /></Slot>
      <Slot on><circle cx="12" cy="12" r="11" fill="#fbc916" /><path d="M12 12 2.500 6.500A11 11 0 0 1 21.500 6.500H12z" fill="#e33b2e" /><path d="M12 12 2.500 6.500A11 11 0 0 0 11 23l5-8z" fill="#279b48" /><path d="M12 6.500h9.500A11 11 0 0 1 11 23l5-8z" fill="#fbc916" /><circle cx="12" cy="12" r="5.500" fill="#fff" /><circle cx="12" cy="12" r="4.300" fill="#4285f4" /></Slot>
      <Slot><path d="M8 2l13 2-3.500 17L1.500 18z" fill="#8fc5d5" /><path d="M17.500 21 21 4l2 16z" fill="#d9d9d9" /><path d="M8 1.500l13.500 2-.5 2L7.500 3.500z" fill="#eee" /><path d="M2 17.500 10 10l9 4-1.500 7z" fill="#5ba3bb" /></Slot>
      <Slot><path d="M3 1h18v22H3z" fill="#fff" /><path d="M5 3h14v4H5z" fill="#1c1c1c" /><path d="M6 10.500h3m2 0h3m2 0h3M6 15h3m2 0h3m2 0h3M6 19.500h3m2 0h3m2 0h3" stroke="#222" strokeWidth="2" /></Slot>
      <Slot><ellipse cx="11" cy="13" rx="10" ry="9" fill="#c9dbe8" /><circle cx="6" cy="10" r="2" fill="#3fa653" /><circle cx="11" cy="7.500" r="2" fill="#e8c12e" /><circle cx="5" cy="15" r="2" fill="#d8402e" /><circle cx="10" cy="18" r="2" fill="#3c78c8" /><path d="M22 1 14 22l-2-1L20 1z" fill="#b9722e" /><path d="M20 1l3-.5-2 8-2.500-1z" fill="#e5b876" /></Slot>
      <Slot><circle cx="12" cy="12" r="11" fill="#ffb52c" /><path d="M12 1C5 1 0 7 1 13c.5 4 3 7 5 8-3-6 0-14 8-14 4 0 7 2 8.500 4C22 5 17 1 12 1z" fill="#6f3ee0" /><path d="M12 1c6 0 10 4 11 10-1.500-2.500-5-4-8-4z" fill="#ff7139" /><circle cx="12" cy="12" r="6.500" fill="#fff" /><path d="M10.500 10.500a1.600 1.600 0 1 1 3 0l-.8 1V16h-1.400v-4.500z" fill="#333" /></Slot>
      <Slot><path d="M17 0l6 3v18l-6 3-9-9.500-5 4L1 17V7l2-1.500 5 4zM17 7l-5.500 5 5.500 5zM3.500 9.500v5L6 12z" fill="#9058cf" fillRule="evenodd" /><path d="M17 0l6 3v18l-6 3z" fill="#b37be8" /></Slot>
      <Slot><path d="M17 0l6 3v18l-6 3L7 14.500l-4.500 3.600L.7 17V16l4.300-4-4.300-4V7l1.800-1.100L7 9.500zM17 7l-6 5 6 5z" fill="#1b8bd8" fillRule="evenodd" /><path d="M17 0l6 3v18l-6 3z" fill="#33a7ee" /></Slot>
      <Slot on><Clip /></Slot>
      <Slot on><Clip /><circle cx="18" cy="18" r="4" fill="#e32626" /></Slot>
      <Slot active className="ml-px w-12"><path d="M0 0h24v24H0z" fill="#eaf1f8" /><path d="M6 3h7.500c3.500 0 5.500 2 5.500 4.800 0 2.300-1.200 3.700-3 4.400L20 20h-4.600l-3.200-7.200H10V20H6z" fill="#2c6fb5" /><path d="M6 3h4v17H6z" fill="#67a9dc" /><path d="M10 6.500h3c1.300 0 2 .6 2 1.700s-.7 1.800-2 1.800h-3z" fill="#eaf1f8" /></Slot>
      <div className="ml-auto flex items-center text-[12px]">
        <svg viewBox="0 0 12 8" className="h-2 w-3" fill="none" stroke="#fff" strokeWidth="1.500"><path d="M1 7l5-5 5 5" /></svg>
        <svg viewBox="0 0 16 14" className="ml-[11px] h-[14px] w-4" fill="none" stroke="#fff" strokeWidth="1.200"><path d="M5 4.500h9.500v7H5z" /><path d="M6.500 6h6.500v4H6.500zM15 6.500v3" fill="#fff" /><path d="M1 1v2m3-2v2M0 3.500h5v3H0zM2.500 7v5H5" /></svg>
        <svg viewBox="0 0 18 16" className="ml-[7px] h-4 w-[18px]" fill="none" stroke="#fff" strokeWidth="1.200"><path d="M1 5.500h3L8 2v12l-4-3.500H1zM10.500 5.500c1.500 1.500 1.500 3.500 0 5M12.800 3.500c2.500 2.500 2.500 6.500 0 9M15 1.800c3.500 3.500 3.500 9 0 12.400" /></svg>
        <svg viewBox="0 0 18 16" className="ml-[9px] h-4 w-[18px]" fill="none" stroke="#fff" strokeWidth="1.200"><path d="M5 12 11 1l2.500 1.500L8 13.500l-3 1.500zM5 9c-3 0-5 2-4 4s6 2 9 0l2-7c1-1 3 1 1.500 2L12 10h3" /></svg>
        <svg viewBox="0 0 23 13" className="ml-[10px] h-[13px] w-[23px]" fill="none" stroke="#fff" strokeWidth="1.200"><path d="M.7.7h21.600v11.600H.7z" /><path d="M3 4h18M3 6.500h18" strokeDasharray="1.500 1.500" /><path d="M6 9.500h11" /></svg>
        <T w={19} className="ml-[13px]">ESP</T>
        <div className="ml-4 flex w-[58px] flex-col items-center text-[12px] leading-[18px]"><T w={27}>21:04</T><T w={58}>19-04-2020</T></div>
        <div className="relative ml-[17px] h-[28px] w-[24px]">
          <svg viewBox="0 0 17 17" className="h-[17px] w-[17px]"><path d="M0 0h16v12h-5v4.500L7 12H0z" fill="#fff" /><path d="M3 3.500h10M3 6h10M3 8.500h7" stroke="#222" /></svg>
          <div className="absolute right-0 bottom-0 flex h-4 w-4 items-center justify-center rounded-full border border-[#8a8a8a] bg-[#2c2c2c] text-[11px]">3</div>
        </div>
        <div className="mr-[3px] ml-[13px] h-10 w-px bg-[#777]" />
      </div>
    </div>
  );
}

export default function App() {
  return (
    <div className="relative h-[1083px] w-[1915px] overflow-hidden bg-[#eeeeee] font-['Open_Sans','Noto_Sans',sans-serif]">
      <div className="flex h-[3px] bg-black">
        <div className="ml-[282px] flex w-[1366px] bg-[#222]">
          <div className="ml-[299px] w-10 bg-[#76b0e8]" /><div className="ml-[107px] w-10 bg-[#76b0e8]" /><div className="ml-[152px] w-12 bg-[#76b0e8]" />
        </div>
      </div>
      <TitleBar />
      <TabStrip />
      <Ribbon />
      <div className="h-[28px] border-b-2 border-[#c8c8c8] bg-[#eeeeee]" />
      <div className="flex h-[843px] bg-[#c8c8c8]">
        <Browser />
        <Canvas />
      </div>
      <StatusBar />
      <Taskbar />
      <svg viewBox="0 0 6 10" className="absolute top-[539px] left-0 h-[10px] w-[6px]" fill="none" stroke="#333"><circle cx="-3" cy="5" r="4" /></svg>
      <svg viewBox="0 0 6 10" className="absolute top-[539px] right-0 h-[10px] w-[6px]" fill="#fff" stroke="#333"><circle cx="6" cy="5" r="4.500" /></svg>
      <svg viewBox="0 0 10 6" className="absolute top-[3px] left-[950px] h-[6px] w-[10px]" fill="none" stroke="#333"><path d="M1 0c0 6 8 6 8 0" /></svg>
    </div>
  );
}
